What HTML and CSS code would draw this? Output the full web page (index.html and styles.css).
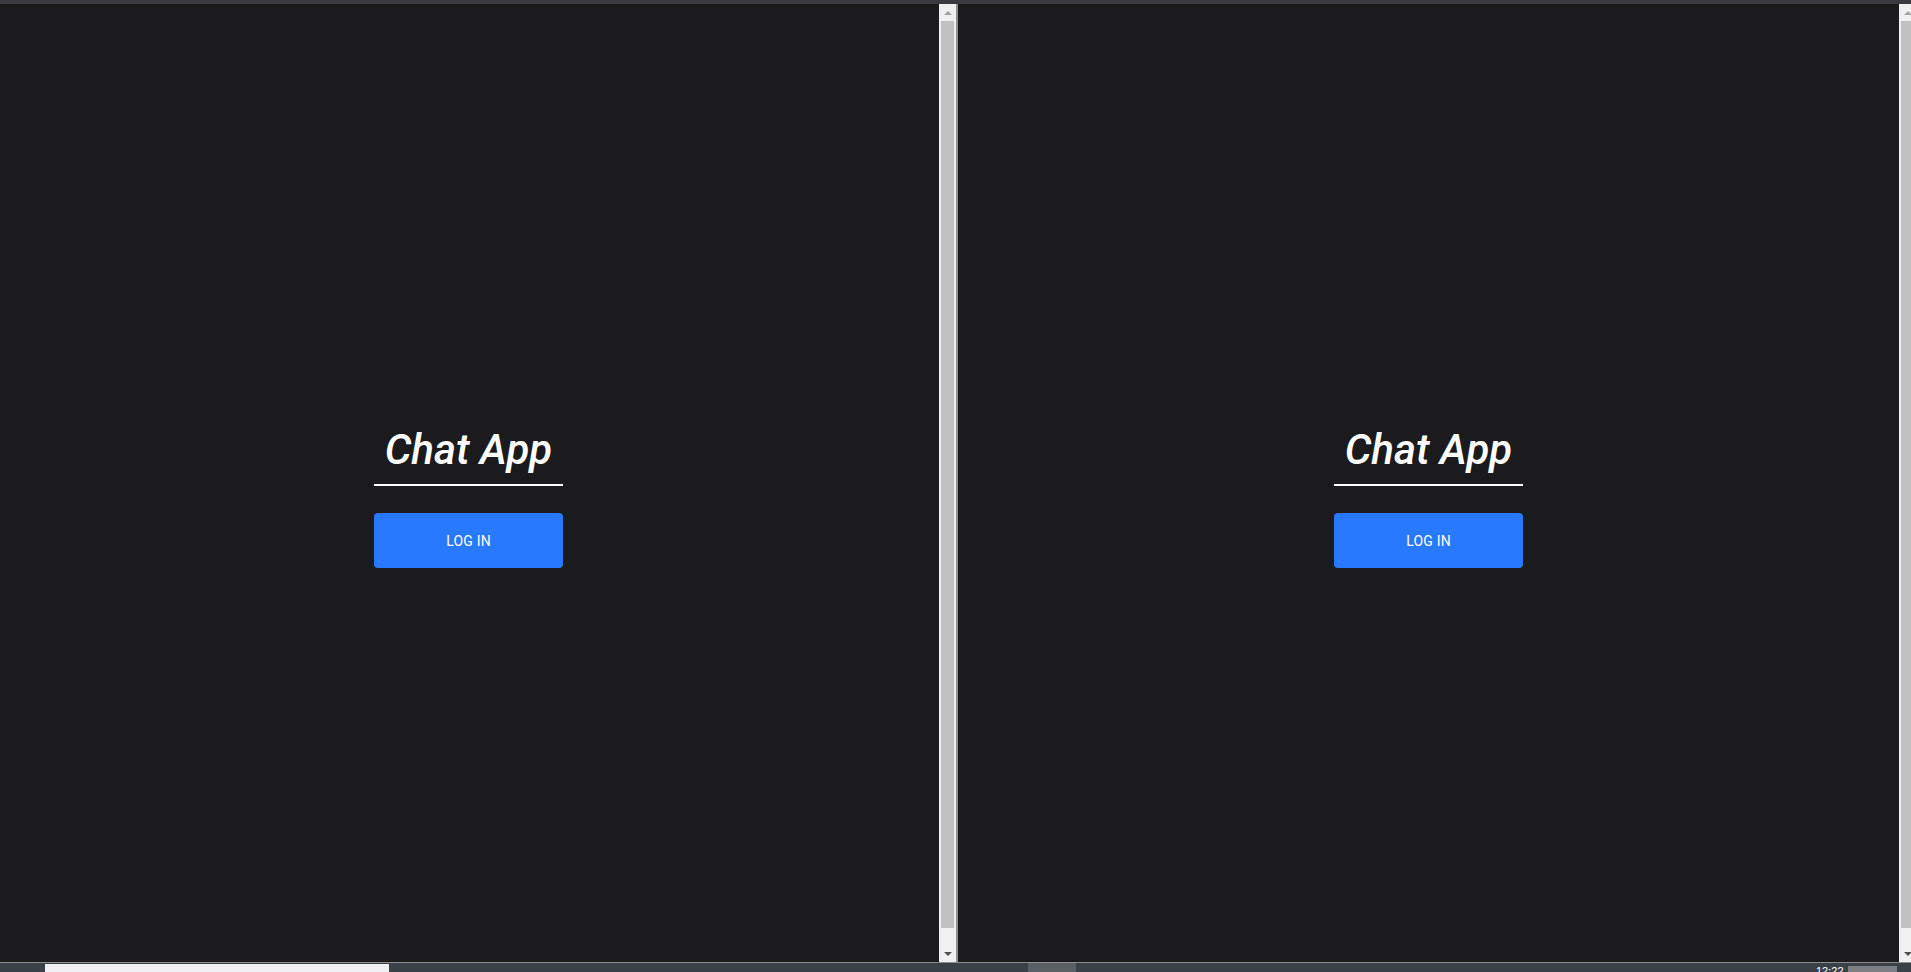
FILE: index.html
```html
<!DOCTYPE html>
<html>
<head>
<meta charset="utf-8">
<title>Chat App</title>
<link rel="stylesheet" href="styles.css">
</head>
<body>
<div class="screen">
  <div class="topbar"></div>
  <div class="main">
    <div class="pane left">
      <div class="login">
        <h1 class="title">Chat App</h1>
        <button class="btn">LOG IN</button>
      </div>
    </div>
    <div class="sb">
      <div class="sb-btn"><span class="arr up dis"></span></div>
      <div class="sb-track"><div class="sb-thumb"></div></div>
      <div class="sb-btn"><span class="arr down"></span></div>
    </div>
    <div class="divider"></div>
    <div class="pane right">
      <div class="login">
        <h1 class="title">Chat App</h1>
        <button class="btn">LOG IN</button>
      </div>
    </div>
    <div class="sb-clip">
      <div class="sb">
        <div class="sb-btn"><span class="arr up dis"></span></div>
        <div class="sb-track"><div class="sb-thumb"></div></div>
        <div class="sb-btn"><span class="arr down"></span></div>
      </div>
    </div>
  </div>
  <div class="taskbar">
    <div class="tb-gap a"></div>
    <div class="tb-input"></div>
    <div class="tb-gap b"></div>
    <div class="tb-app"></div>
    <div class="tb-gap c"></div>
    <div class="tb-clock">12:22</div>
    <div class="tb-box"></div>
    <div class="tb-gap d"></div>
  </div>
</div>
</body>
</html>
```

FILE: styles.css
```css
html, body {
  margin: 0;
  padding: 0;
  background: #1b1b1d;
  overflow: hidden;
}
.screen {
  width: 1911px;
  height: 972px;
  display: flex;
  flex-direction: column;
  font-family: Roboto, "Liberation Sans", sans-serif;
}
.topbar {
  height: 4px;
  background: #3a3a41;
  flex: none;
}
.main {
  flex: 1;
  display: flex;
  min-height: 0;
}
.pane {
  background: #1b1b1d;
  display: flex;
  flex-direction: column;
  align-items: center;
  padding-top: 421px;
  box-sizing: border-box;
}
.pane.left { width: 939px; padding-right: 2px; }
.pane.right { width: 941px; }
.login {
  display: flex;
  flex-direction: column;
  align-items: center;
  width: 189px;
}
.title {
  margin: 0;
  width: 100%;
  font-size: 42px;
  line-height: 49px;
  font-style: italic;
  font-weight: 500;
  color: #ffffff;
  text-align: center;
  padding-bottom: 10px;
  border-bottom: 2px solid #ffffff;
  box-sizing: content-box;
  white-space: nowrap;
}
.btn {
  margin-top: 27px;
  width: 189px;
  height: 55px;
  border: none;
  border-radius: 4px;
  background: #2979ff;
  color: #ffffff;
  font-family: Roboto, "Liberation Sans", sans-serif;
  font-size: 14px;
  font-weight: 400;
  letter-spacing: 0.2px;
  padding: 0;
}
.sb {
  width: 17px;
  flex: none;
  background: #f0f0f0;
  display: flex;
  flex-direction: column;
  height: 100%;
}
.sb-btn {
  height: 17px;
  flex: none;
  display: flex;
  align-items: center;
  justify-content: center;
}
.sb-track {
  flex: 1;
  display: flex;
  flex-direction: column;
  padding: 0 2px 17px 2px;
}
.sb-thumb {
  flex: 1;
  background: #c1c1c1;
}
.arr {
  width: 0;
  height: 0;
  border-left: 4px solid transparent;
  border-right: 4px solid transparent;
}
.arr.up { border-bottom: 4px solid #a3a3a3; }
.arr.down { border-top: 4px solid #505050; }
.divider {
  width: 2px;
  flex: none;
  background: #8f8f92;
}
.sb-clip {
  width: 12px;
  flex: none;
  overflow: hidden;
  height: 100%;
}
.taskbar {
  height: 10px;
  flex: none;
  display: flex;
  background: #3b4247;
  border-top: 1px solid #8a8c8e;
  box-sizing: border-box;
  overflow: hidden;
}
.tb-gap.a { width: 45px; }
.tb-input { width: 344px; background: #f0f0f2; margin-top: 1px; }
.tb-gap.b { width: 639px; }
.tb-app { width: 48px; background: #5b6064; }
.tb-gap.c { width: 740px; }
.tb-clock {
  width: 32px;
  color: #ffffff;
  font-size: 11px;
  line-height: 11px;
  padding-top: 3px;
  font-family: "Segoe UI", "Liberation Sans", sans-serif;
}
.tb-box { width: 49px; background: #7a7d81; margin-top: 3px; }
.tb-gap.d { flex: 1; }
```
